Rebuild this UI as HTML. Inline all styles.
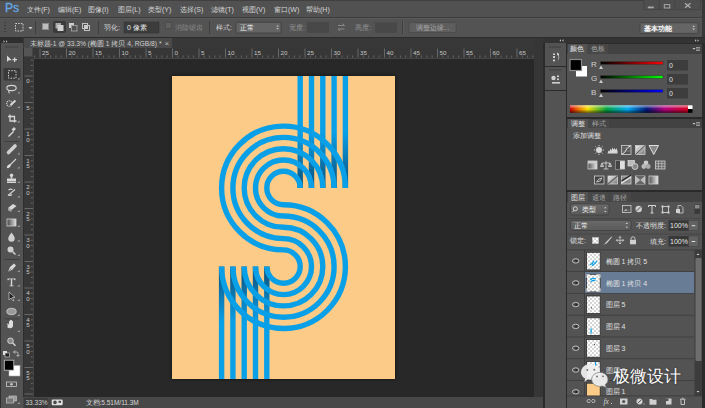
<!DOCTYPE html>
<html><head><meta charset="utf-8">
<style>
*{margin:0;padding:0;box-sizing:border-box}
html,body{width:705px;height:408px;overflow:hidden;background:#535353;font-family:"Liberation Sans",sans-serif;color:#dcdcdc}
.a{position:absolute}
.t{position:absolute;white-space:nowrap;font-size:8px;line-height:10px}
.m{position:absolute;white-space:nowrap;font-size:7px;line-height:9px;top:5px;color:#d6d6d6}
.p{position:absolute;white-space:nowrap;font-size:7px;line-height:9px}
.o{position:absolute;white-space:nowrap;font-size:7px;line-height:9px;top:23px;color:#d6d6d6}
</style></head><body>
<!-- menu bar -->
<div class="a" style="left:0;top:0;width:705px;height:17px;background:#515151"></div>
<div class="a" style="left:0;top:0;width:705px;height:1px;background:#404040"></div>
<div class="t" style="left:5px;top:2px;font-size:12px;line-height:13px;color:#65a6e4;-webkit-text-stroke:0.35px #65a6e4">Ps</div>
<div class="m" style="left:27px">文件(F)</div>
<div class="m" style="left:58px">编辑(E)</div>
<div class="m" style="left:88px">图像(I)</div>
<div class="m" style="left:118px">图层(L)</div>
<div class="m" style="left:148px">类型(Y)</div>
<div class="m" style="left:180px">选择(S)</div>
<div class="m" style="left:211px">滤镜(T)</div>
<div class="m" style="left:242px">视图(V)</div>
<div class="m" style="left:274px">窗口(W)</div>
<div class="m" style="left:306px">帮助(H)</div>
<svg class="a" style="left:640px;top:0" width="65" height="12" viewBox="640 0 65 12">
<rect x="643.8" y="-1" width="56.6" height="10.7" fill="#4e4e4e" stroke="#434343" stroke-width="0.8"/>
<rect x="659" y="0" width="0.8" height="9.7" fill="#434343"/><rect x="674.5" y="0" width="0.8" height="9.7" fill="#434343"/>
<rect x="647.8" y="6.5" width="6" height="1.8" fill="#a8a8a8"/>
<rect x="664.3" y="4.6" width="5.5" height="3.4" fill="none" stroke="#a8a8a8" stroke-width="1"/>
<path d="M685 3.3 l5.5 4.5 M690.5 3.3 l-5.5 4.5" stroke="#b0b0b0" stroke-width="1.2"/>
</svg>

<!-- options bar -->
<div class="a" style="left:0;top:17px;width:705px;height:1px;background:#3c3c3c"></div>
<div class="a" style="left:0;top:18px;width:705px;height:19px;background:#535353;border-top:1px solid #5a5a5a"></div>
<div class="a" style="left:0;top:37px;width:705px;height:1px;background:#2c2c2c"></div>
<svg class="a" style="left:0;top:18px" width="705" height="19">
<g fill="#3c3c3c"><rect x="4" y="4" width="2" height="1"/><rect x="4" y="7" width="2" height="1"/><rect x="4" y="10" width="2" height="1"/><rect x="4" y="13" width="2" height="1"/></g>
<rect x="15.5" y="5.5" width="7.5" height="7.5" fill="none" stroke="#d0d0d0" stroke-dasharray="1.5,1.2"/>
<path d="M28.5 9 h4 l-2 2.5z" fill="#d0d0d0"/>
<rect x="35" y="3" width="1" height="13" fill="#3e3e3e"/>
<rect x="42.5" y="5.5" width="6" height="6" fill="#bdbdbd" stroke="#8a8a8a" stroke-width="1"/>
<rect x="53" y="3" width="13" height="12" rx="2" fill="#3a3a3a"/>
<rect x="55.5" y="5" width="5.5" height="5.5" fill="#aaa"/><rect x="57.5" y="7" width="6" height="6" fill="#d0d0d0"/>
<rect x="69" y="5" width="5" height="5" fill="#cfcfcf"/><rect x="71.5" y="7.5" width="5.5" height="5.5" fill="#535353" stroke="#9a9a9a" stroke-width="1"/>
<rect x="82.5" y="5.5" width="5" height="5" fill="none" stroke="#c0c0c0"/><rect x="84.5" y="7.5" width="5" height="5" fill="none" stroke="#c0c0c0"/><rect x="84.5" y="7.5" width="3" height="3" fill="#d0d0d0"/>
<rect x="98" y="3" width="1" height="13" fill="#3e3e3e"/>
<rect x="124" y="4" width="35" height="11" fill="#3c3c3c" stroke="#303030" stroke-width="0.5"/>
<rect x="165.5" y="4.5" width="6" height="6" rx="1" fill="#616161" stroke="#4a4a4a"/>
<rect x="209" y="3" width="1" height="13" fill="#3e3e3e"/>
<rect x="236" y="4.3" width="45" height="10.7" rx="1.2" fill="#646464" stroke="#3a3a3a" stroke-width="0.7"/>
<path d="M276.3 8.5 l1.3 -1.3 l1.3 1.3z M276.3 10.3 l1.3 1.3 l1.3 -1.3z" fill="#d8d8d8"/>
<rect x="307" y="4" width="22" height="11" fill="#484848"/>
<path d="M338 7.5 h6.5 l-2 -1.8 M344.5 11 h-6.5 l2 1.8" fill="none" stroke="#8a8a8a" stroke-width="1"/>
<rect x="375" y="4.5" width="22" height="10.5" fill="#484848"/>
<rect x="402" y="3" width="1" height="13" fill="#3e3e3e"/><rect x="403" y="3" width="1" height="13" fill="#5c5c5c"/>
<rect x="409" y="4.5" width="47" height="10" rx="1" fill="#5e5e5e" stroke="#444" stroke-width="0.6"/>
<rect x="640" y="4.8" width="58" height="10.6" rx="1" fill="#656565" stroke="#3e3e3e" stroke-width="0.7"/>
<path d="M692.3 8.8 l1.4 -1.4 l1.4 1.4z M692.3 10.6 l1.4 1.4 l1.4 -1.4z" fill="#d8d8d8"/>
</svg>
<div class="o" style="left:104px">羽化:</div>
<div class="o" style="left:127px;color:#e8e8e8">0 像素</div>
<div class="o" style="left:175px;color:#8a8a8a">消除锯齿</div>
<div class="o" style="left:216px">样式:</div>
<div class="o" style="left:240px;color:#f0f0f0">正常</div>
<div class="o" style="left:289px;color:#969696">宽度:</div>
<div class="o" style="left:355px;color:#969696">高度:</div>
<div class="o" style="left:415.5px;color:#a8a8a8">调整边缘...</div>
<div class="o" style="left:644px;top:23.5px;color:#ffffff;-webkit-text-stroke:0.25px #fff">基本功能</div>

<!-- toolbar -->
<div class="a" style="left:0;top:38px;width:24px;height:370px;background:#2e2e2e"></div>
<div class="a" style="left:1px;top:43px;width:22px;height:365px;background:#535353"></div>
<svg class="a" style="left:0;top:38px" width="24" height="370" viewBox="0 38 24 370">
<path d="M3.5 40.2 l1.5 1.3 l-1.5 1.3z M6 40.2 l1.5 1.3 l-1.5 1.3z" fill="#bbb"/>
<path d="M5.5 47 h13" stroke="#333" stroke-width="1.1" stroke-dasharray="1.2,0.8"/>
<g fill="#d8d8d8" stroke="#d8d8d8">
<path d="M7 55.5 v6.5 l1.8 -1.8 h3z" stroke="none"/>
<path d="M14.7 57.5 v4.5 M12.5 59.7 h4.5" stroke-width="1.2" fill="none"/>
</g>
<rect x="3.5" y="68" width="17" height="12.5" rx="1.5" fill="#393939"/>
<rect x="8.5" y="70.7" width="7.5" height="7.5" fill="none" stroke="#cfcfcf" stroke-dasharray="1.5,1.2"/>
<g fill="#b5b5b5"><path d="M17.5 79.5 h2 v-2z"/><path d="M17.5 93.5 h2 v-2z"/><path d="M17.5 108 h2 v-2z"/><path d="M17.5 122.5 h2 v-2z"/><path d="M17.5 137.5 h2 v-2z"/><path d="M17.5 154.5 h2 v-2z"/><path d="M17.5 168.5 h2 v-2z"/><path d="M17.5 183 h2 v-2z"/><path d="M17.5 197.5 h2 v-2z"/><path d="M17.5 212 h2 v-2z"/><path d="M17.5 227 h2 v-2z"/><path d="M17.5 241.5 h2 v-2z"/><path d="M17.5 256 h2 v-2z"/><path d="M17.5 272 h2 v-2z"/><path d="M17.5 286.5 h2 v-2z"/><path d="M17.5 301 h2 v-2z"/><path d="M17.5 316 h2 v-2z"/><path d="M17.5 332 h2 v-2z"/><path d="M17.5 404 h2 v-2z"/></g>
<g fill="none" stroke="#d5d5d5" stroke-width="1.1">
<ellipse cx="11.5" cy="88" rx="4.7" ry="2.6"/>
<path d="M9 90.3 q-1 1.5 0.5 3"/>
<circle cx="9.5" cy="103.5" r="2.8" stroke-dasharray="1.2,0.8"/>
<path d="M10.5 105 l5 -4.5" stroke-width="2"/>
<path d="M10 114.5 v6.5 h6.5 M8 116.5 h6.5 v6" stroke-width="1.3"/>
<path d="M8.5 136.5 l5 -5" stroke-width="1.4"/>
<path d="M12.5 130.5 l2.5 -2.5" stroke-width="2.6"/>
<path d="M8.5 152.5 l6.5 -6.5" stroke-width="3.6" stroke-linecap="round" stroke="#cfcfcf"/>
<path d="M10 165 l6 -6" stroke-width="1.1"/>
</g>
<ellipse cx="8.8" cy="166.2" rx="2.4" ry="1.3" transform="rotate(-40 8.8 166.2)" fill="#ddd"/>
<g fill="#d8d8d8">
<circle cx="11.5" cy="175.2" r="1.7"/><rect x="10.7" y="175.5" width="1.6" height="3"/><path d="M7 178.5 h9 v3 h-9z"/><rect x="7" y="182" width="9" height="1"/>
</g>
<g fill="none" stroke="#d5d5d5" stroke-width="1.1"><path d="M8 195.5 l7 -6"/><path d="M8.5 190 q2 -1.5 4 -0.5"/></g>
<path d="M8 196 q3 -2.5 4.5 -1.5 q-1 2 -4.5 1.5z" fill="#ddd"/>
<path d="M8 208 l5 -4 l3.5 2 l-5 4z" fill="#d8d8d8"/><path d="M8 208 v2.2 l3.5 1.8 v-2z" fill="#aaa"/>
<defs><linearGradient id="tg" x1="0" x2="1"><stop offset="0" stop-color="#444"/><stop offset="1" stop-color="#e0e0e0"/></linearGradient></defs>
<rect x="7" y="219" width="9" height="7" fill="url(#tg)" stroke="#d0d0d0" stroke-width="0.8"/>
<path d="M11.5 232.5 q-3.5 4.5 -3.2 6 a3.2 3.2 0 0 0 6.4 0 q0.3 -1.5 -3.2 -6z" fill="#d0d0d0"/>
<circle cx="10.5" cy="249.5" r="3" fill="#d0d0d0"/><path d="M12.5 251.5 l3 3" stroke="#d0d0d0" stroke-width="1.5"/>
<rect x="4.5" y="259" width="15" height="0.8" fill="#3a3a3a"/>
<rect x="4.5" y="141" width="15" height="0.8" fill="#3a3a3a"/>
<rect x="4.5" y="318.5" width="15" height="0.8" fill="#3a3a3a"/>
<path d="M8 272 l2 -5 l4 -3.5 l2 2 l-3.5 4z" fill="#d8d8d8"/><path d="M8 272 l3.5 -3.5" stroke="#555" stroke-width="0.6"/>
<path d="M7.5 278.5 h8 v1.8 h-0.8 q-0.5 -1 -1.5 -1 h-1 v6.2 h1.3 v0.8 h-4 v-0.8 h1.3 v-6.2 h-1 q-1 0 -1.5 1 h-0.8z" fill="#d8d8d8"/>
<path d="M9 292 v8 l2 -2 l2 3 l1 -0.6 l-1.8 -3 h2.8z" fill="#222" stroke="#cfcfcf" stroke-width="0.7"/>
<ellipse cx="11.5" cy="311.5" rx="4.7" ry="3.2" fill="#9a9a9a" stroke="#d0d0d0" stroke-width="0.8"/>
<path d="M8 326 q-1.5 -2 -0.5 -2.5 q1 0 1.5 1.2 v-3.5 q0.3 -1 1 0 v2 v-3 q0.5 -1 1 0 v3 v-3 q0.5 -0.8 1 0 v3 v-2 q0.5 -0.8 1 0 v4 q0 3 -3 3 q-1.5 0 -3 -1.2z" fill="#ddd"/>
<circle cx="10.5" cy="340.8" r="2.8" fill="#888" stroke="#d0d0d0" stroke-width="1"/><path d="M12.5 342.8 l3 3" stroke="#d0d0d0" stroke-width="1.5"/>
<rect x="3" y="351" width="4" height="4" fill="#ddd"/><rect x="5" y="353" width="4.5" height="4" fill="#222" stroke="#ddd" stroke-width="0.6"/>
<path d="M13.5 352 h3 q1.5 0 1.5 1.5 v2.5 M16.5 355 l1.5 1.5 l1.5 -1.5 M15 350.5 l-1.5 1.5 l1.5 1.5" fill="none" stroke="#d0d0d0" stroke-width="0.8"/>
<rect x="9" y="365.5" width="11" height="10.5" fill="#fff" stroke="#aaa" stroke-width="0.6"/>
<rect x="4.3" y="360.2" width="9.5" height="10" fill="#000" stroke="#c8c8c8" stroke-width="0.8"/>
<rect x="6.5" y="382" width="10" height="4.5" fill="none" stroke="#c8c8c8" stroke-width="0.8"/><circle cx="11.5" cy="384.2" r="1.3" fill="#c8c8c8"/>
<rect x="9" y="396" width="7.5" height="5" fill="#9a9a9a" stroke="#ccc" stroke-width="0.6"/><rect x="6.3" y="398" width="7.5" height="5" fill="#777" stroke="#ccc" stroke-width="0.6"/>
</svg>

<div class="a" style="left:702px;top:0;width:3px;height:37px;background:#383838"></div>
<!-- doc tab bar -->
<div class="a" style="left:23px;top:38px;width:520px;height:10px;background:#383838"></div>
<div class="a" style="left:24px;top:38px;width:148px;height:10px;background:#4a4a4a"></div>
<div class="t" style="left:29.5px;top:39.5px;font-size:6.7px;line-height:8px;color:#cfcfcf">未标题-1 @ 33.3% (椭圆 1 拷贝 4, RGB/8) *</div>
<div class="t" style="left:164.5px;top:39px;font-size:8px;line-height:9px;color:#bdbdbd">×</div>

<!-- rulers -->
<div class="a" style="left:24px;top:48px;width:510px;height:10px;background:#373737"></div>
<div class="a" style="left:24px;top:48px;width:9px;height:349px;background:#373737"></div>
<div class="a" style="left:534px;top:38px;width:9px;height:359px;background:#363636"></div>
<svg class="a" style="left:0;top:0" width="543" height="408">
<path d="M34.70 55.5v2 M40.00 48.5v9 M45.30 55.5v2 M50.60 55.5v2 M55.90 55.5v2 M61.20 55.5v2 M66.50 48.5v9 M71.80 55.5v2 M77.10 55.5v2 M82.40 55.5v2 M87.70 55.5v2 M93.00 48.5v9 M98.30 55.5v2 M103.60 55.5v2 M108.90 55.5v2 M114.20 55.5v2 M119.50 48.5v9 M124.80 55.5v2 M130.10 55.5v2 M135.40 55.5v2 M140.70 55.5v2 M146.00 48.5v9 M151.30 55.5v2 M156.60 55.5v2 M161.90 55.5v2 M167.20 55.5v2 M172.50 48.5v9 M177.80 55.5v2 M183.10 55.5v2 M188.40 55.5v2 M193.70 55.5v2 M199.00 48.5v9 M204.30 55.5v2 M209.60 55.5v2 M214.90 55.5v2 M220.20 55.5v2 M225.50 48.5v9 M230.80 55.5v2 M236.10 55.5v2 M241.40 55.5v2 M246.70 55.5v2 M252.00 48.5v9 M257.30 55.5v2 M262.60 55.5v2 M267.90 55.5v2 M273.20 55.5v2 M278.50 48.5v9 M283.80 55.5v2 M289.10 55.5v2 M294.40 55.5v2 M299.70 55.5v2 M305.00 48.5v9 M310.30 55.5v2 M315.60 55.5v2 M320.90 55.5v2 M326.20 55.5v2 M331.50 48.5v9 M336.80 55.5v2 M342.10 55.5v2 M347.40 55.5v2 M352.70 55.5v2 M358.00 48.5v9 M363.30 55.5v2 M368.60 55.5v2 M373.90 55.5v2 M379.20 55.5v2 M384.50 48.5v9 M389.80 55.5v2 M395.10 55.5v2 M400.40 55.5v2 M405.70 55.5v2 M411.00 48.5v9 M416.30 55.5v2 M421.60 55.5v2 M426.90 55.5v2 M432.20 55.5v2 M437.50 48.5v9 M442.80 55.5v2 M448.10 55.5v2 M453.40 55.5v2 M458.70 55.5v2 M464.00 48.5v9 M469.30 55.5v2 M474.60 55.5v2 M479.90 55.5v2 M485.20 55.5v2 M490.50 48.5v9 M495.80 55.5v2 M501.10 55.5v2 M506.40 55.5v2 M511.70 55.5v2 M517.00 48.5v9 M522.30 55.5v2 M527.60 55.5v2 M532.90 55.5v2 M30.8 60.10h2 M30.8 65.40h2 M30.8 70.70h2 M24.5 76.00h8.5 M30.8 81.30h2 M30.8 86.60h2 M30.8 91.90h2 M30.8 97.20h2 M24.5 102.50h8.5 M30.8 107.80h2 M30.8 113.10h2 M30.8 118.40h2 M30.8 123.70h2 M24.5 129.00h8.5 M30.8 134.30h2 M30.8 139.60h2 M30.8 144.90h2 M30.8 150.20h2 M24.5 155.50h8.5 M30.8 160.80h2 M30.8 166.10h2 M30.8 171.40h2 M30.8 176.70h2 M24.5 182.00h8.5 M30.8 187.30h2 M30.8 192.60h2 M30.8 197.90h2 M30.8 203.20h2 M24.5 208.50h8.5 M30.8 213.80h2 M30.8 219.10h2 M30.8 224.40h2 M30.8 229.70h2 M24.5 235.00h8.5 M30.8 240.30h2 M30.8 245.60h2 M30.8 250.90h2 M30.8 256.20h2 M24.5 261.50h8.5 M30.8 266.80h2 M30.8 272.10h2 M30.8 277.40h2 M30.8 282.70h2 M24.5 288.00h8.5 M30.8 293.30h2 M30.8 298.60h2 M30.8 303.90h2 M30.8 309.20h2 M24.5 314.50h8.5 M30.8 319.80h2 M30.8 325.10h2 M30.8 330.40h2 M30.8 335.70h2 M24.5 341.00h8.5 M30.8 346.30h2 M30.8 351.60h2 M30.8 356.90h2 M30.8 362.20h2 M24.5 367.50h8.5 M30.8 372.80h2 M30.8 378.10h2 M30.8 383.40h2 M30.8 388.70h2 M24.5 394.00h8.5" stroke="#747474" stroke-width="0.8" fill="none"/>
<g font-family="Liberation Sans" font-size="6.2" fill="#c6c6c6"><text x="42.00" y="54.5">25</text><text x="68.50" y="54.5">20</text><text x="95.00" y="54.5">15</text><text x="121.50" y="54.5">10</text><text x="148.00" y="54.5">5</text><text x="174.50" y="54.5">0</text><text x="201.00" y="54.5">5</text><text x="227.50" y="54.5">10</text><text x="254.00" y="54.5">15</text><text x="280.50" y="54.5">20</text><text x="307.00" y="54.5">25</text><text x="333.50" y="54.5">30</text><text x="360.00" y="54.5">35</text><text x="386.50" y="54.5">40</text><text x="413.00" y="54.5">45</text><text x="439.50" y="54.5">50</text><text x="466.00" y="54.5">55</text><text x="492.50" y="54.5">60</text><text x="519.00" y="54.5">65</text><text x="26.3" y="83.30">0</text><text x="26.3" y="109.80">5</text><text x="26.3" y="136.30">1</text><text x="26.3" y="141.70">0</text><text x="26.3" y="162.80">1</text><text x="26.3" y="168.20">5</text><text x="26.3" y="189.30">2</text><text x="26.3" y="194.70">0</text><text x="26.3" y="215.80">2</text><text x="26.3" y="221.20">5</text><text x="26.3" y="242.30">3</text><text x="26.3" y="247.70">0</text><text x="26.3" y="268.80">3</text><text x="26.3" y="274.20">5</text><text x="26.3" y="295.30">4</text><text x="26.3" y="300.70">0</text><text x="26.3" y="321.80">4</text><text x="26.3" y="327.20">5</text><text x="26.3" y="348.30">5</text><text x="26.3" y="353.70">0</text><text x="26.3" y="374.80">5</text><text x="26.3" y="380.20">5</text></g>
</svg>
<div class="a" style="left:24px;top:48px;width:9px;height:9px;background:#555;border-right:1px solid #444;border-bottom:1px solid #444"></div>
<!-- canvas -->
<div class="a" style="left:33px;top:57.5px;width:501px;height:339.5px;background:#282828"></div>
<div class="a" style="left:33px;top:57.5px;width:501px;height:0.8px;background:#464646"></div>
<div class="a" style="left:33px;top:57.5px;width:0.8px;height:339.5px;background:#444"></div>
<div class="a" style="left:172px;top:76px;width:223px;height:303px;background:#fbcb87;box-shadow:0 0 3px #111"></div>

<svg class="a" style="left:172px;top:76px" width="223" height="303" viewBox="172 76 223 303">
<defs><linearGradient id="gu" gradientUnits="userSpaceOnUse" x1="0" y1="132" x2="0" y2="188"><stop offset="0" stop-color="#09a0e8"/><stop offset="0.6" stop-color="#0c6fa5"/><stop offset="1" stop-color="#084f78"/></linearGradient>
<linearGradient id="gd" gradientUnits="userSpaceOnUse" x1="0" y1="266.6" x2="0" y2="322.6"><stop offset="0" stop-color="#084f78"/><stop offset="0.4" stop-color="#0c6fa5"/><stop offset="1" stop-color="#09a0e8"/></linearGradient></defs>
<rect x="297.50" y="76" width="5.4" height="112.00" fill="url(#gu)"/>
<rect x="264.10" y="266.60" width="5.4" height="112.40" fill="url(#gd)"/>
<rect x="308.80" y="76" width="5.4" height="112.00" fill="url(#gu)"/>
<rect x="252.80" y="266.60" width="5.4" height="112.40" fill="url(#gd)"/>
<rect x="320.10" y="76" width="5.4" height="112.00" fill="url(#gu)"/>
<rect x="241.50" y="266.60" width="5.4" height="112.40" fill="url(#gd)"/>
<rect x="331.40" y="76" width="5.4" height="112.00" fill="url(#gu)"/>
<rect x="230.20" y="266.60" width="5.4" height="112.40" fill="url(#gd)"/>
<rect x="342.70" y="76" width="5.4" height="112.00" fill="url(#gu)"/>
<rect x="218.90" y="266.60" width="5.4" height="112.40" fill="url(#gd)"/>
<path d="M300.20,188.00 A16.70,16.70 0 1 0 283.50,204.70 A61.90,61.90 0 1 1 221.60,266.60 M311.50,188.00 A28.00,28.00 0 1 0 283.50,216.00 A50.60,50.60 0 1 1 232.90,266.60 M322.80,188.00 A39.30,39.30 0 1 0 283.50,227.30 A39.30,39.30 0 1 1 244.20,266.60 M334.10,188.00 A50.60,50.60 0 1 0 283.50,238.60 A28.00,28.00 0 1 1 255.50,266.60 M345.40,188.00 A61.90,61.90 0 1 0 283.50,249.90 A16.70,16.70 0 1 1 266.80,266.60" fill="none" stroke="#09a0e8" stroke-width="5.4"/>
</svg>
<!-- status bar -->
<div class="a" style="left:23px;top:397px;width:520px;height:11px;background:#474747"></div>
<div class="a" style="left:24px;top:397.5px;width:24px;height:10.5px;background:#3c3c3c"></div>
<div class="t" style="left:25.5px;top:399px;font-size:6.5px;line-height:8px;color:#d0d0d0">33.33%</div>
<svg class="a" style="left:51px;top:399px" width="13" height="7" viewBox="51 399 13 7"><rect x="51.7" y="399.5" width="11" height="5.8" rx="1.2" fill="#e0e0e0"/><circle cx="55" cy="402.4" r="1.8" fill="#474747"/><rect x="58.5" y="400.8" width="2.5" height="2" fill="#474747"/></svg>
<div class="t" style="left:85.5px;top:399px;font-size:6.5px;line-height:8px;color:#d8d8d8">文档:5.51M/11.3M</div>
<!-- right panels -->
<div class="a" style="left:543px;top:38px;width:162px;height:370px;background:#2a2a2a"></div>
<div class="a" style="left:543px;top:38px;width:162px;height:5px;background:#333"></div>
<svg class="a" style="left:543px;top:38px" width="162" height="6" viewBox="543 38 162 6">
<path d="M563.5 39.3 l-1.5 1.2 l1.5 1.2z M561 39.3 l-1.5 1.2 l1.5 1.2z" fill="#bbb"/>
<path d="M695 39.3 l1.5 1.2 l-1.5 1.2z M697.5 39.3 l1.5 1.2 l-1.5 1.2z" fill="#bbb"/>
</svg>
<div class="a" style="left:545px;top:43px;width:21px;height:23px;background:#535353"></div>
<div class="a" style="left:545px;top:67px;width:21px;height:22.5px;background:#535353"></div>
<div class="a" style="left:545px;top:90.5px;width:21px;height:318px;background:#535353"></div>
<svg class="a" style="left:545px;top:43px" width="21" height="50" viewBox="545 43 21 50">
<path d="M549.5 47 h12 M549.5 70 h12" stroke="#333" stroke-width="1.1" stroke-dasharray="1.2,0.8"/>
<g fill="#d0d0d0"><rect x="553" y="53.5" width="2" height="1.5"/><rect x="553" y="56" width="2" height="2"/><rect x="553" y="59.5" width="2" height="1.8"/><path d="M557.5 53.5 q3.5 3.8 0 8 q2 -4 0 -8z"/><rect x="557" y="52.8" width="1.5" height="2"/><rect x="557.5" y="54" width="1.5" height="1.5"/></g>
<g fill="#d0d0d0"><circle cx="553.5" cy="78" r="2.2"/><rect x="557" y="75.5" width="2" height="1.6"/><rect x="557" y="78.5" width="2" height="1.6"/><rect x="552" y="82" width="8" height="1.6"/></g>
</svg>

<div class="a" style="left:567px;top:43.5px;width:135px;height:73px;background:#535353"></div>
<div class="a" style="left:567px;top:43.5px;width:135px;height:10px;background:#424242"></div>
<div class="a" style="left:568px;top:43.5px;width:19px;height:10px;background:#535353"></div>
<div class="a" style="left:587px;top:43.5px;width:21px;height:10px;background:#474747"></div>
<div class="p" style="left:570px;top:44px;color:#e6e6e6">颜色</div>
<div class="p" style="left:591px;top:44px;color:#a8a8a8">色板</div>
<svg class="a" style="left:567px;top:43px" width="138" height="80" viewBox="567 43 138 80">
<path d="M692.5 48 h3 l-1.5 1.8z" fill="#ccc"/><g fill="#aaa"><rect x="696" y="47" width="4" height="0.8"/><rect x="696" y="48.6" width="4" height="0.8"/><rect x="696" y="50.2" width="4" height="0.8"/></g>
<rect x="576" y="66" width="11" height="10.5" fill="#fff"/>
<rect x="570" y="59.5" width="11.5" height="11" fill="#000" stroke="#8a8a8a" stroke-width="1.2"/>
<defs>
<linearGradient id="gr" x1="0" x2="1"><stop offset="0" stop-color="#000"/><stop offset="1" stop-color="#ff0000"/></linearGradient>
<linearGradient id="gg" x1="0" x2="1"><stop offset="0" stop-color="#000"/><stop offset="1" stop-color="#00ff00"/></linearGradient>
<linearGradient id="gb" x1="0" x2="1"><stop offset="0" stop-color="#000"/><stop offset="1" stop-color="#0000ff"/></linearGradient>
<linearGradient id="gs" x1="0" x2="1"><stop offset="0" stop-color="#d00000"/><stop offset="0.07" stop-color="#f07000"/><stop offset="0.15" stop-color="#f5e000"/><stop offset="0.31" stop-color="#00a040"/><stop offset="0.49" stop-color="#00a8f0"/><stop offset="0.65" stop-color="#001878"/><stop offset="0.8" stop-color="#b0007a"/><stop offset="1" stop-color="#d80020"/></linearGradient>
<linearGradient id="gsv" x1="0" x2="0" y1="0" y2="1"><stop offset="0" stop-color="#fff" stop-opacity="0.6"/><stop offset="0.45" stop-color="#fff" stop-opacity="0"/><stop offset="0.55" stop-color="#000" stop-opacity="0"/><stop offset="1" stop-color="#000" stop-opacity="0.6"/></linearGradient>
</defs>
<rect x="600.5" y="61.5" width="62.5" height="3" fill="url(#gr)" stroke="#3a3a3a" stroke-width="0.6"/>
<rect x="600.5" y="75.5" width="62.5" height="3" fill="url(#gg)" stroke="#3a3a3a" stroke-width="0.6"/>
<rect x="600.5" y="89.5" width="62.5" height="3" fill="url(#gb)" stroke="#3a3a3a" stroke-width="0.6"/>
<g fill="#c8c8c8"><path d="M599 69 l2 -3.5 l2 3.5z"/><path d="M599 83 l2 -3.5 l2 3.5z"/><path d="M599 97 l2 -3.5 l2 3.5z"/></g>
<g fill="#3d3d3d"><rect x="667" y="60" width="21" height="10.5"/><rect x="667" y="74" width="21" height="10.5"/><rect x="667" y="88" width="21" height="10.5"/></g>
<rect x="570" y="105.3" width="118" height="7.5" fill="url(#gs)"/>
<rect x="570" y="105.3" width="118" height="7.5" fill="url(#gsv)"/>
<rect x="688" y="105.3" width="4.5" height="4" fill="#fff"/><rect x="688" y="109" width="4.5" height="3.8" fill="#000"/>
</svg>
<div class="p" style="left:591px;top:60px;font-size:8px;color:#d0d0d0">R</div>
<div class="p" style="left:591px;top:74px;font-size:8px;color:#d0d0d0">G</div>
<div class="p" style="left:591px;top:88px;font-size:8px;color:#d0d0d0">B</div>
<div class="p" style="left:669px;top:61px;font-size:7px;color:#e0e0e0">0</div>
<div class="p" style="left:669px;top:75px;font-size:7px;color:#e0e0e0">0</div>
<div class="p" style="left:669px;top:89px;font-size:7px;color:#e0e0e0">0</div>

<!-- adjustments -->
<div class="a" style="left:567px;top:118.5px;width:135px;height:71px;background:#535353"></div>
<div class="a" style="left:567px;top:118.5px;width:135px;height:9.5px;background:#424242"></div>
<div class="a" style="left:568px;top:118.5px;width:20px;height:9.5px;background:#535353"></div>
<div class="a" style="left:588px;top:118.5px;width:21px;height:9.5px;background:#474747"></div>
<div class="p" style="left:571px;top:119px;color:#e6e6e6">调整</div>
<div class="p" style="left:592px;top:119px;color:#a8a8a8">样式</div>
<div class="p" style="left:573px;top:131px;font-size:6.8px;color:#e0e0e0">添加调整</div>
<svg class="a" style="left:567px;top:118px" width="138" height="72" viewBox="567 118 138 72">
<path d="M692.5 123 h3 l-1.5 1.8z" fill="#ccc"/><g fill="#aaa"><rect x="696" y="122" width="4" height="0.8"/><rect x="696" y="123.6" width="4" height="0.8"/><rect x="696" y="125.2" width="4" height="0.8"/></g>
<defs><linearGradient id="ig" x1="0" x2="1" y1="0" y2="1"><stop offset="0" stop-color="#eee"/><stop offset="1" stop-color="#777"/></linearGradient>
<linearGradient id="ih" x1="0" x2="1"><stop offset="0" stop-color="#555"/><stop offset="1" stop-color="#e8e8e8"/></linearGradient></defs>
<g stroke="#d8d8d8" fill="none" stroke-width="0.9">
<circle cx="599" cy="150" r="2.6" fill="#d8d8d8"/>
<path d="M599 145 v1.3 M599 153.7 v1.3 M594 150 h1.3 M602.7 150 h1.3 M595.5 146.5 l0.9 0.9 M601.6 152.6 l0.9 0.9 M602.5 146.5 l-0.9 0.9 M596.4 152.6 l-0.9 0.9"/>
</g>
<path d="M607.5 153.5 l1 -3 l1 1 l1 -3 l1 2 l1 -3 l1 2 l1 -1.5 l1 2 l1 -2 l1 3 v2.5z" fill="#d8d8d8"/>
<rect x="621.5" y="145.5" width="9.5" height="9" fill="#555" stroke="#cfcfcf" stroke-width="0.8"/>
<path d="M622 154 q3 -1 4 -4 t4.5 -4" stroke="#eee" fill="none" stroke-width="1"/><path d="M622 148 h9 M622 151 h9" stroke="#999" stroke-width="0.5"/>
<rect x="635.5" y="145.5" width="9.5" height="9" fill="url(#ig)" stroke="#cfcfcf" stroke-width="0.8"/>
<path d="M635.5 154.5 l9.5 -9" stroke="#333" stroke-width="0.8"/>
<path d="M649 145.5 h9.5 l-4.75 9z" fill="#888" stroke="#ddd" stroke-width="1"/>
<rect x="588" y="161" width="9" height="8" fill="url(#ih)" stroke="#cfcfcf" stroke-width="0.8"/><rect x="588" y="161" width="9" height="2.5" fill="#ccc"/>
<path d="M606 161 v8 M602 163 h8 M602 163 l-1.5 3.5 h3z M610 163 l-1.5 3.5 h3z M603.5 169 h5" stroke="#d8d8d8" fill="#888" stroke-width="0.8"/>
<rect x="615.5" y="161" width="9" height="8" fill="#ddd" stroke="#cfcfcf" stroke-width="0.8"/><rect x="615.5" y="161" width="4.5" height="8" fill="#444"/>
<rect x="628" y="160.5" width="6.5" height="5.5" fill="#bbb" stroke="#ddd" stroke-width="0.7"/><circle cx="635" cy="166.5" r="3" fill="#888" stroke="#ddd" stroke-width="0.8"/>
<circle cx="646" cy="163" r="2.4" fill="#ccc"/><circle cx="643.8" cy="166.5" r="2.4" fill="#bbb"/><circle cx="648.2" cy="166.5" r="2.4" fill="#aaa"/>
<rect x="655.5" y="161" width="9.5" height="8" fill="#666" stroke="#cfcfcf" stroke-width="0.8"/><path d="M658.5 161 v8 M661.8 161 v8 M655.5 163.7 h9.5 M655.5 166.3 h9.5" stroke="#cfcfcf" stroke-width="0.6"/>
<rect x="594.5" y="176" width="9.5" height="8" fill="#444" stroke="#cfcfcf" stroke-width="0.8"/><path d="M596.5 182 q2 -4 5.5 -4 q-1 4 -5.5 4z" stroke="#ddd" fill="none" stroke-width="0.8"/>
<rect x="608" y="176" width="9.5" height="8" fill="url(#ig)" stroke="#cfcfcf" stroke-width="0.8"/><path d="M608 184 l9.5 -8" stroke="#666" stroke-width="1.5"/>
<rect x="621.5" y="176" width="9.5" height="8" fill="#888" stroke="#cfcfcf" stroke-width="0.8"/><path d="M621.5 183 l9.5 -6" stroke="#eee" stroke-width="1.2"/><path d="M621.5 181 l9.5 -6" stroke="#222" stroke-width="1.2"/>
<rect x="635.5" y="176" width="9.5" height="8" fill="#bbb" stroke="#cfcfcf" stroke-width="0.8"/><path d="M635.5 176 l4.75 4 l4.75 -4 M635.5 184 l4.75 -4 l4.75 4" fill="#666"/>
<rect x="649" y="176" width="9" height="8" fill="url(#ih)" stroke="#cfcfcf" stroke-width="0.8"/>
</g>
</svg>

<!-- layers -->
<div class="a" style="left:567px;top:192px;width:135px;height:216px;background:#535353"></div>
<div class="a" style="left:567px;top:192px;width:135px;height:9.5px;background:#424242"></div>
<div class="a" style="left:568px;top:192px;width:20px;height:9.5px;background:#535353"></div>
<div class="a" style="left:588px;top:192px;width:21px;height:9.5px;background:#474747"></div>
<div class="a" style="left:609.5px;top:192px;width:21.5px;height:9.5px;background:#474747"></div>
<div class="p" style="left:571px;top:192.5px;color:#e6e6e6">图层</div>
<div class="p" style="left:592px;top:192.5px;color:#a8a8a8">通道</div>
<div class="p" style="left:613px;top:192.5px;color:#a8a8a8">路径</div>

<!-- layer controls -->
<svg class="a" style="left:567px;top:201px" width="138" height="207" viewBox="567 201 138 207">
<defs><pattern id="ck" width="4" height="4" patternUnits="userSpaceOnUse"><rect width="4" height="4" fill="#fff"/><rect width="2" height="2" fill="#d6d6d6"/><rect x="2" y="2" width="2" height="2" fill="#d6d6d6"/></pattern>
<linearGradient id="dd" x1="0" x2="0" y1="0" y2="1"><stop offset="0" stop-color="#6a6a6a"/><stop offset="1" stop-color="#5a5a5a"/></linearGradient></defs>
<path d="M692.5 196.5 h3 l-1.5 1.8z" fill="#ccc"/>
<rect x="570.5" y="204" width="38.5" height="11" rx="2" fill="url(#dd)" stroke="#3c3c3c" stroke-width="0.7"/>
<circle cx="575.3" cy="208.8" r="2" fill="none" stroke="#e0e0e0" stroke-width="0.9"/><path d="M574 210.3 l-1.5 1.8" stroke="#e0e0e0" stroke-width="0.9"/>
<path d="M604 208.3 l1.3 -1.3 l1.3 1.3z M604 211 l1.3 1.3 l1.3 -1.3z" fill="#d8d8d8"/>
<rect x="622.5" y="205.5" width="8.5" height="7" fill="none" stroke="#d0d0d0" stroke-width="0.8"/><path d="M623.5 211.5 l2.5 -2.5 l2 1.5 l1.5 -1z" fill="#d0d0d0"/>
<circle cx="638.7" cy="209" r="3.2" fill="#d0d0d0"/><path d="M636.5 211 l4.5 -4.5" stroke="#535353" stroke-width="1"/>
<path d="M648.5 205.5 h7 v1.5 M652 205.5 v7.5 M650.5 213 h3 M648.5 205.5 v1.5" stroke="#d8d8d8" stroke-width="1" fill="none"/>
<rect x="662.5" y="206.5" width="6" height="6" fill="none" stroke="#d0d0d0" stroke-width="0.9"/><g fill="#d0d0d0"><rect x="661.5" y="205.5" width="2" height="2"/><rect x="667.5" y="205.5" width="2" height="2"/><rect x="661.5" y="211.5" width="2" height="2"/><rect x="667.5" y="211.5" width="2" height="2"/></g>
<path d="M678 205.5 h3 l2 2 v5.5 h-5z" fill="none" stroke="#d0d0d0" stroke-width="0.8"/><rect x="676" y="209" width="4" height="4" fill="#d0d0d0"/>
<rect x="694.5" y="204.5" width="5.5" height="9.5" rx="1" fill="#3a3a3a"/><rect x="695" y="205" width="4.5" height="3.5" fill="#8a8a8a"/>
<rect x="567" y="218" width="135" height="0.8" fill="#474747"/>
<rect x="570.5" y="220.3" width="60.5" height="10.2" rx="2" fill="url(#dd)" stroke="#3c3c3c" stroke-width="0.7"/>
<path d="M625.5 224 l1.3 -1.3 l1.3 1.3z M625.5 226.7 l1.3 1.3 l1.3 -1.3z" fill="#d8d8d8"/>
<rect x="668.5" y="220.3" width="20" height="10.4" fill="#383838"/><rect x="688.5" y="220.3" width="10" height="10.4" fill="#626262" stroke="#3c3c3c" stroke-width="0.5"/><rect x="691.7" y="225.2" width="3.5" height="1" fill="#e0e0e0"/>
<rect x="567" y="233.6" width="135" height="0.8" fill="#474747"/>
<rect x="668.5" y="236" width="20" height="10.5" fill="#383838"/><rect x="688.5" y="236" width="10" height="10.5" fill="#626262" stroke="#3c3c3c" stroke-width="0.5"/><rect x="691.7" y="241" width="3.5" height="1" fill="#e0e0e0"/>
<rect x="592.5" y="237.5" width="6" height="6" fill="url(#ck)" stroke="#ccc" stroke-width="0.5"/>
<path d="M603 244.5 q2 -0.3 3 -2.5 l5.5 -5.5 l0.6 0.6 l-5 6 q-1.5 1.5 -4.1 1.4z" fill="#d0d0d0"/>
<path d="M620 236.5 v7.5 M616.3 240.3 h7.5 M618.8 237.8 l1.2 -1.3 l1.2 1.3 M618.8 242.7 l1.2 1.3 l1.2 -1.3 M617.5 239 l-1.2 1.3 l1.2 1.3 M622.5 239 l1.2 1.3 l-1.2 1.3" stroke="#d0d0d0" stroke-width="0.8" fill="none"/>
<path d="M631 239.8 v-1 a2 2 0 0 1 4 0 v1" stroke="#d0d0d0" stroke-width="0.9" fill="none"/><rect x="630" y="239.8" width="6" height="4.5" fill="#d0d0d0"/>
<rect x="567" y="249.5" width="135" height="0.8" fill="#3a3a3a"/>
<rect x="567" y="271.1" width="127.5" height="0.8" fill="#3c3c3c"/>
<rect x="584" y="250.0" width="0.8" height="21.8" fill="#3c3c3c"/>
<ellipse cx="575.7" cy="260.9" rx="3.3" ry="2.2" fill="#505050" stroke="#c8c8c8" stroke-width="0.9"/><circle cx="576.3" cy="261.0" r="1.1" fill="#252525"/>
<rect x="586.6" y="252.3" width="13.6" height="17.6" fill="url(#ck)" stroke="#2e2e2e" stroke-width="0.8"/>
<path d="M590 264.8 q3 -1 4 -4 M592 265.8 q3 -2 5 -5" stroke="#09a0e8" stroke-width="1.2" fill="none"/>
<text x="605.5" y="263.5" font-size="7" fill="#e0e0e0">椭圆 1 拷贝 5</text>
<rect x="584.5" y="272.0" width="109.5" height="21.8" fill="#687c96"/>
<rect x="567" y="293.1" width="127.5" height="0.8" fill="#3c3c3c"/>
<rect x="584" y="272.0" width="0.8" height="21.8" fill="#3c3c3c"/>
<ellipse cx="575.7" cy="282.9" rx="3.3" ry="2.2" fill="#505050" stroke="#c8c8c8" stroke-width="0.9"/><circle cx="576.3" cy="283.0" r="1.1" fill="#252525"/>
<rect x="586.6" y="274.3" width="13.6" height="17.6" fill="url(#ck)" stroke="#2e2e2e" stroke-width="0.8"/>
<path d="M590 279.8 q3 -2 6 -1 M590.5 281.8 q3 -2 5 -1" stroke="#09a0e8" stroke-width="1.2" fill="none"/>
<path d="M586.3 277.8 v-3.3 h3.5 M596.5 274.5 h3.8 v3.3 M586.3 288.3 v3.3 h3.5 M596.5 291.6 h3.8 v-3.3" stroke="#e6e6e6" stroke-width="0.7" fill="none"/>
<text x="605.5" y="285.5" font-size="7" fill="#e0e0e0">椭圆 1 拷贝 4</text>
<rect x="567" y="314.8" width="127.5" height="0.8" fill="#3c3c3c"/>
<rect x="584" y="293.7" width="0.8" height="21.8" fill="#3c3c3c"/>
<ellipse cx="575.7" cy="304.6" rx="3.3" ry="2.2" fill="#505050" stroke="#c8c8c8" stroke-width="0.9"/><circle cx="576.3" cy="304.7" r="1.1" fill="#252525"/>
<rect x="586.6" y="296.0" width="13.6" height="17.6" fill="url(#ck)" stroke="#2e2e2e" stroke-width="0.8"/>
<rect x="591" y="307.5" width="1" height="1" fill="#333"/>
<text x="605.5" y="307.2" font-size="7" fill="#e0e0e0">图层 5</text>
<rect x="567" y="336.6" width="127.5" height="0.8" fill="#3c3c3c"/>
<rect x="584" y="315.5" width="0.8" height="21.8" fill="#3c3c3c"/>
<ellipse cx="575.7" cy="326.4" rx="3.3" ry="2.2" fill="#505050" stroke="#c8c8c8" stroke-width="0.9"/><circle cx="576.3" cy="326.5" r="1.1" fill="#252525"/>
<rect x="586.6" y="317.8" width="13.6" height="17.6" fill="url(#ck)" stroke="#2e2e2e" stroke-width="0.8"/>
<rect x="590.5" y="328.3" width="1.2" height="5.5" fill="#09a0e8"/>
<text x="605.5" y="329.0" font-size="7" fill="#e0e0e0">图层 4</text>
<rect x="567" y="358.4" width="127.5" height="0.8" fill="#3c3c3c"/>
<rect x="584" y="337.3" width="0.8" height="21.8" fill="#3c3c3c"/>
<ellipse cx="575.7" cy="348.2" rx="3.3" ry="2.2" fill="#505050" stroke="#c8c8c8" stroke-width="0.9"/><circle cx="576.3" cy="348.3" r="1.1" fill="#252525"/>
<rect x="586.6" y="339.6" width="13.6" height="17.6" fill="url(#ck)" stroke="#2e2e2e" stroke-width="0.8"/>
<rect x="594" y="344.1" width="1" height="1" fill="#333"/>
<text x="605.5" y="350.8" font-size="7" fill="#e0e0e0">图层 3</text>
<rect x="567" y="380.2" width="127.5" height="0.8" fill="#3c3c3c"/>
<rect x="584" y="359.1" width="0.8" height="21.8" fill="#3c3c3c"/>
<ellipse cx="575.7" cy="370.0" rx="3.3" ry="2.2" fill="#505050" stroke="#c8c8c8" stroke-width="0.9"/><circle cx="576.3" cy="370.1" r="1.1" fill="#252525"/>
<rect x="586.6" y="361.4" width="13.6" height="17.6" fill="url(#ck)" stroke="#2e2e2e" stroke-width="0.8"/>
<rect x="595" y="361.9" width="1.2" height="4" fill="#09a0e8"/>
<text x="605.5" y="372.6" font-size="7" fill="#e0e0e0">图层 2</text>
<rect x="567" y="402.0" width="127.5" height="0.8" fill="#3c3c3c"/>
<rect x="584" y="380.9" width="0.8" height="21.8" fill="#3c3c3c"/>
<ellipse cx="575.7" cy="391.8" rx="3.3" ry="2.2" fill="#505050" stroke="#c8c8c8" stroke-width="0.9"/><circle cx="576.3" cy="391.9" r="1.1" fill="#252525"/>
<rect x="586.6" y="383.2" width="13.6" height="17.6" fill="#fbcb87" stroke="#2e2e2e" stroke-width="0.8"/>
<text x="605.5" y="394.4" font-size="7" fill="#e0e0e0">图层 1</text>
<rect x="694.5" y="250" width="7.5" height="146" fill="#3c3c3c"/>
<path d="M696.5 255 l1.5 -1.6 l1.5 1.6z" fill="#ddd"/>
<rect x="695.5" y="258" width="6" height="103" rx="1" fill="#6e6e6e"/>
<path d="M696.5 391 l1.5 1.6 l1.5 -1.6z" fill="#ddd"/>
<rect x="567" y="396" width="135" height="12" fill="#535353"/>
<rect x="567" y="395.5" width="135" height="0.8" fill="#3a3a3a"/>
<g fill="none" stroke="#cfcfcf" stroke-width="0.8"><path d="M590 399.5 h-1.5 a1.5 1.5 0 0 0 0 3 h1.5 M592 399.5 h1.5 a1.5 1.5 0 0 1 0 3 h-1.5 M589.5 401 h3"/></g>
<text x="603.5" y="404" font-size="7.5" font-style="italic" fill="#d8d8d8" font-family="Liberation Serif">fx</text><rect x="611" y="403" width="1" height="1" fill="#ccc"/>
<rect x="620" y="398.5" width="7.5" height="6" fill="#d0d0d0"/><circle cx="623.7" cy="401.5" r="1.6" fill="#535353"/>
<circle cx="639.5" cy="401.5" r="3" fill="#d0d0d0"/><path d="M637.5 403.5 l4 -4" stroke="#535353" stroke-width="0.9"/><rect x="643.5" y="403.5" width="1" height="1" fill="#ccc"/>
<path d="M649.5 399 h2.5 l0.7 0.8 h3.8 v5 h-7z" fill="#d0d0d0"/>
<path d="M666 398.5 h5.5 v6 h-5.5z" fill="#d0d0d0"/><path d="M666 398.5 h2.5 v2.5 h-2.5z" fill="#535353"/>
<path d="M680 399.2 h5.5 M681 399.5 v5 h3.5 v-5 M682 398.2 h1.5" stroke="#d0d0d0" stroke-width="0.9" fill="none"/>
</svg>
<div class="p" style="left:582px;top:205px;color:#f0f0f0">类型</div>
<div class="p" style="left:574px;top:221px;color:#f0f0f0">正常</div>
<div class="p" style="left:636px;top:221px;color:#e0e0e0">不透明度:</div>
<div class="p" style="left:670px;top:221px;color:#e8e8e8">100%</div>
<div class="p" style="left:570px;top:236px;color:#e0e0e0">锁定:</div>
<div class="p" style="left:650px;top:237px;color:#e0e0e0">填充:</div>
<div class="p" style="left:670px;top:237px;color:#e8e8e8">100%</div>
<svg class="a" style="left:578px;top:361px" width="34" height="30" viewBox="578 361 34 30">
<path d="M590.7 364.2 a9.3 7.8 0 0 1 0 15.6 q-1.5 0 -3 -0.4 l-3.3 2.6 l0.6 -3.6 a9.3 7.8 0 0 1 5.7 -14.2z" fill="#f0f0f0" fill-opacity="0.93"/>
<circle cx="587.3" cy="370" r="1" fill="#777"/><circle cx="594.3" cy="369.7" r="1" fill="#777"/>
<path d="M599.8 372.4 a8.2 7 0 0 0 0 14 q1.5 0 2.8 -0.4 l3.6 1.6 l-1 -3 a8.2 7 0 0 0 -5.4 -12.2z" fill="#eeeeee" fill-opacity="0.96" stroke="#7a7a7a" stroke-width="0.7"/>
<circle cx="597" cy="376.5" r="0.9" fill="#666"/><circle cx="603" cy="376.3" r="0.9" fill="#666"/>
</svg>
<div class="a" style="left:612.5px;top:365.5px;font-size:17px;line-height:21px;white-space:nowrap;color:#fbfbfb;text-shadow:0 0 2px rgba(0,0,0,.6)">极微设计</div>
</body></html>
